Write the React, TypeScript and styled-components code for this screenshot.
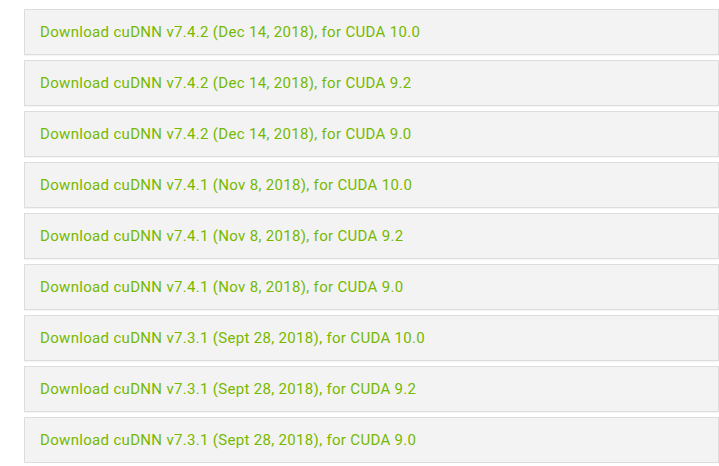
import styled, { createGlobalStyle } from 'styled-components';

const GlobalStyle = createGlobalStyle`
  body {
    margin: 0;
    background: #fff;
    font-family: Roboto, "Liberation Sans", sans-serif;
  }
`;

const releases = [
  'Download cuDNN v7.4.2 (Dec 14, 2018), for CUDA 10.0',
  'Download cuDNN v7.4.2 (Dec 14, 2018), for CUDA 9.2',
  'Download cuDNN v7.4.2 (Dec 14, 2018), for CUDA 9.0',
  'Download cuDNN v7.4.1 (Nov 8, 2018), for CUDA 10.0',
  'Download cuDNN v7.4.1 (Nov 8, 2018), for CUDA 9.2',
  'Download cuDNN v7.4.1 (Nov 8, 2018), for CUDA 9.0',
  'Download cuDNN v7.3.1 (Sept 28, 2018), for CUDA 10.0',
  'Download cuDNN v7.3.1 (Sept 28, 2018), for CUDA 9.2',
  'Download cuDNN v7.3.1 (Sept 28, 2018), for CUDA 9.0',
];

export default function App() {
  return (
    <>
      <GlobalStyle />
      <List>
        {releases.map((r) => (
          <Panel key={r}>
            <Link>{r}</Link>
          </Panel>
        ))}
      </List>
    </>
  );
}

const List = styled.div`
  display: flex;
  flex-direction: column;
  gap: 5px;
  padding: 9px 0 0 24px;
`;

const Panel = styled.div`
  height: 44px;
  box-sizing: content-box;
  background: #f3f3f3;
  border: 1px solid #dddddd;
  box-shadow: 0 1px 1px rgba(0, 0, 0, 0.04);
  display: flex;
  align-items: center;
  padding-left: 15px;
`;

const Link = styled.span`
  color: #76b900;
  font-size: 15px;
  letter-spacing: 0.32px;
`;
